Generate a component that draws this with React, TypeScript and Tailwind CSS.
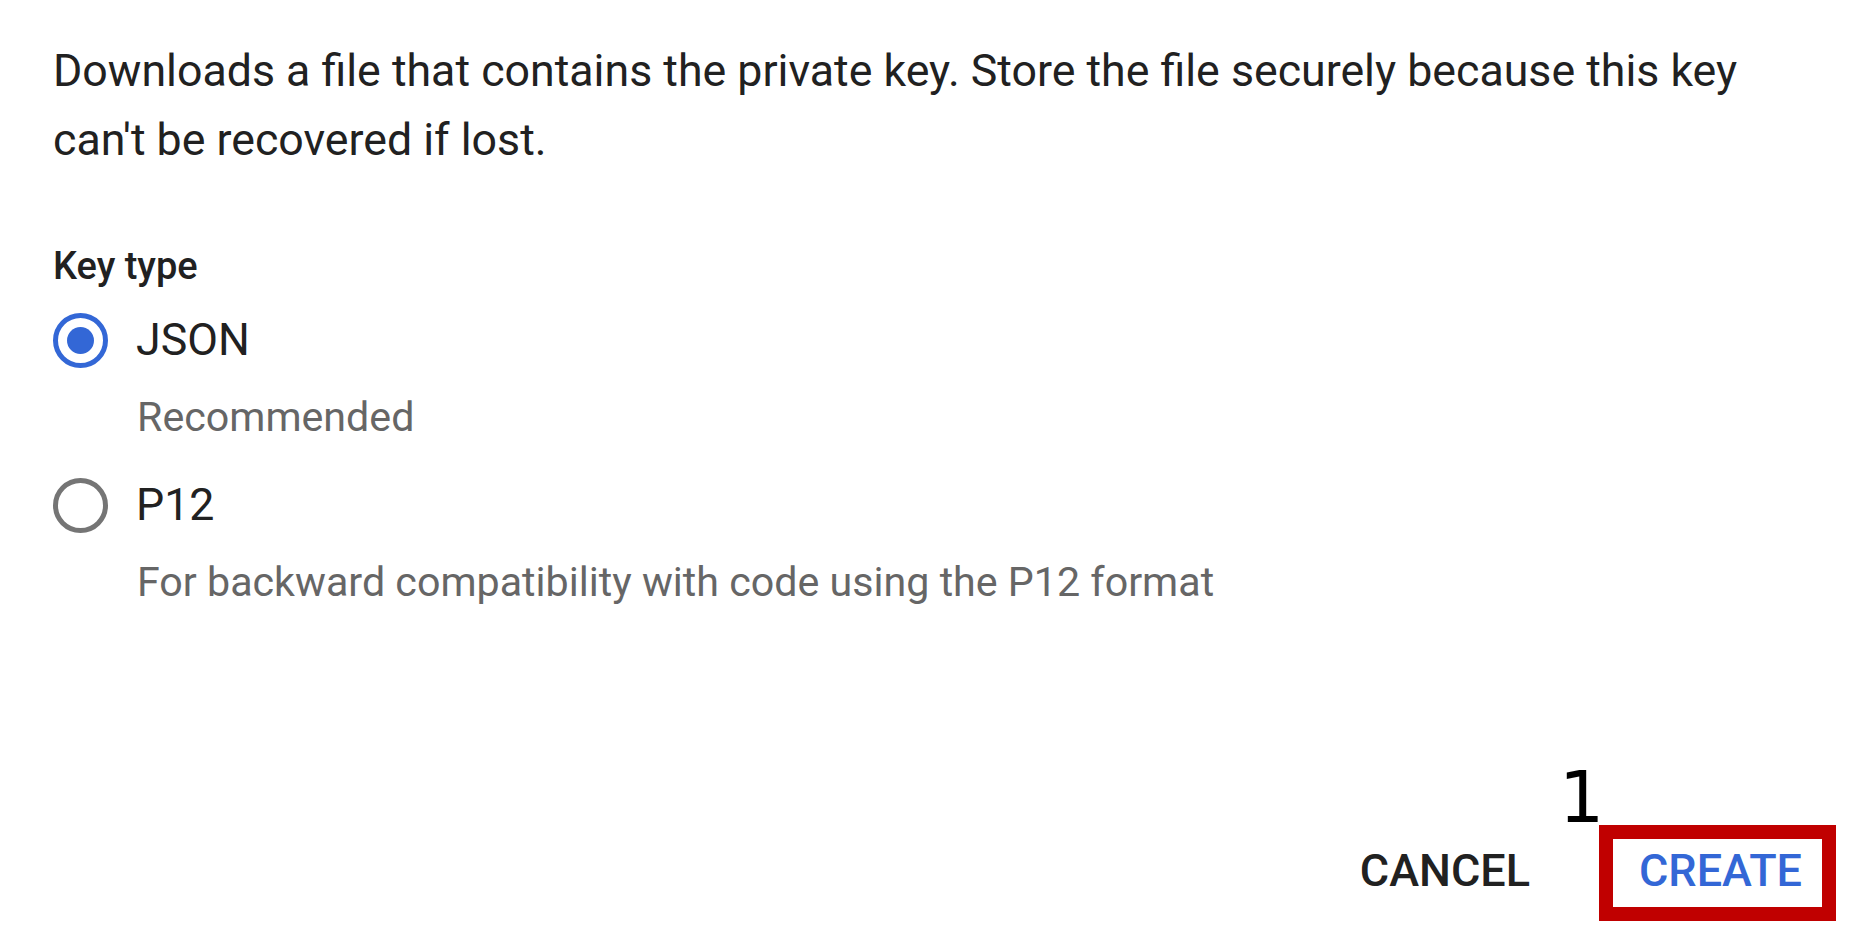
import { useState } from "react";

type KeyType = "json" | "p12";

function Radio({ checked }: { checked: boolean }) {
  return (
    <span
      className={`flex h-[55px] w-[55px] shrink-0 items-center justify-center rounded-full border-[5.5px] ${
        checked ? "border-[#3367d6]" : "border-[#757575]"
      }`}
    >
      {checked && <span className="h-[27px] w-[27px] rounded-full bg-[#3367d6]" />}
    </span>
  );
}

export default function App() {
  const [keyType, setKeyType] = useState<KeyType>("json");

  return (
    <div className="flex h-[942px] w-full flex-col bg-white font-['Roboto',sans-serif] text-[#212121]">
      <div className="pl-[53px] pt-[37px]">
        <p className="text-[44.7px] leading-[69px]">
          Downloads a file that contains the private key. Store the file securely because this key
          <br />
          can't be recovered if lost.
        </p>

        <div className="mt-[69px] text-[38px] font-medium leading-[44px]">Key type</div>

        {/* JSON option */}
        <button
          type="button"
          onClick={() => setKeyType("json")}
          className="mt-[25px] flex h-[55px] items-center gap-[28px] text-left"
        >
          <Radio checked={keyType === "json"} />
          <span className="text-[44.7px] leading-[55px]">JSON</span>
        </button>
        <div className="mt-[24px] pl-[84px] text-[41.2px] leading-[50px] text-[#666666]">Recommended</div>

        {/* P12 option */}
        <button
          type="button"
          onClick={() => setKeyType("p12")}
          className="mt-[36px] flex h-[55px] items-center gap-[28px] text-left"
        >
          <Radio checked={keyType === "p12"} />
          <span className="text-[44.7px] leading-[55px]">P12</span>
        </button>
        <div className="mt-[24px] pl-[84px] text-[41.2px] leading-[50px] text-[#666666]">
          For backward compatibility with code using the P12 format
        </div>
      </div>

      {/* Dialog actions */}
      <div className="mt-auto flex items-start justify-end pb-[21px] pr-[17px]">
        <button
          type="button"
          className="mr-[69px] h-[96px] pb-[6px] text-[45px] font-medium leading-[53px] text-[#212121]"
        >
          CANCEL
        </button>
        <div className="relative w-[237px]">
          <button
            type="button"
            className="h-[96px] w-full pb-[6px] pl-[6px] text-center text-[45px] font-medium leading-[53px] text-[#3367d6]"
          >
            CREATE
          </button>
          {/* annotation */}
          <div className="pointer-events-none absolute inset-0 border-[14px] border-[#c00000]" />
          <span className="absolute left-[-40px] top-[-63px] font-['DejaVu_Sans',sans-serif] text-[71px] leading-[71px] text-black">
            1
          </span>
        </div>
      </div>
    </div>
  );
}
